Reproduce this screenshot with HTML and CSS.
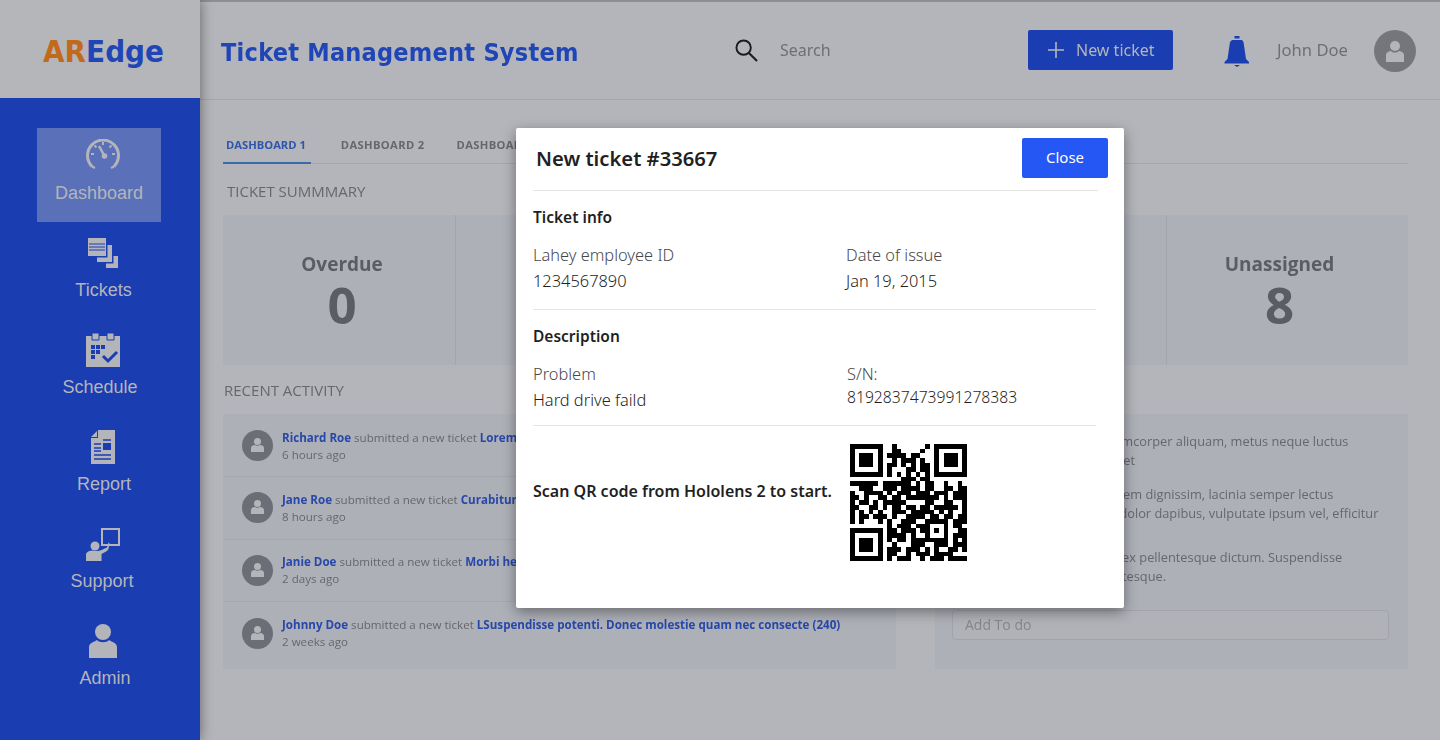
FILE: index.html
```html
<!DOCTYPE html>
<html lang="en">
<head>
  <meta charset="UTF-8">
  <title>Ticket Management System</title>
  <link rel="stylesheet" href="styles.css">
</head>
<body>
  <div class="page">
    <aside class="sidebar">
      <div class="logo"><span class="logo-ar">AR</span>Edge</div>
      <nav class="nav">
        <a class="nav-item active">
          <svg class="nav-icon" viewBox="0 0 34 34"><path d="M6 27.5A15.5 15.5 0 1 1 28 27.5" fill="none" stroke="currentColor" stroke-width="3"/><path d="M6 27.5l3 1.5M28 27.5l-3 1.5M17 3v3M5 15h3M29 15h-3M8.500 6.500l2 2M25.500 6.500l-2 2" stroke="currentColor" stroke-width="2"/><path d="M13 7l5 9" stroke="currentColor" stroke-width="2.500"/><circle cx="18.500" cy="17" r="2.800" fill="currentColor"/></svg>
          <span class="nav-label">Dashboard</span>
        </a>
        <a class="nav-item">
          <svg class="nav-icon" viewBox="0 0 34 34"><path d="M2 2h18v18H2z" fill="currentColor"/><path d="M3 8h16M3 11h16M3 14h16" stroke="#1a3db2"/><path d="M21.500 9H26v17H11v-4.500h10.500z" fill="currentColor"/><path d="M27.500 20H32v12H20v-4.500h7.500z" fill="currentColor"/></svg>
          <span class="nav-label">Tickets</span>
        </a>
        <a class="nav-item">
          <svg class="nav-icon" viewBox="0 0 34 34"><path d="M0 3h34v31H0z" fill="currentColor"/><path d="M6 0h7v7H6zM21 0h7v7h-7z" fill="currentColor" stroke="#1a3db2"/><path d="M5 12h4v4H5zM10 12h4v4h-4zM15 12h4v4h-4zM5 17h4v4H5zM10 17h4v4h-4zM5 22h4v4H5z" fill="#1a3db2"/><path d="M17 23l5 5 9-9" fill="none" stroke="#1a3db2" stroke-width="3"/></svg>
          <span class="nav-label">Schedule</span>
        </a>
        <a class="nav-item">
          <svg class="nav-icon" viewBox="0 0 34 34"><path d="M5 7l6-6v6zM12 0h17v34H5V8h7z" fill="currentColor"/><path d="M17 10h8M8 14h7M8 18h7M8 21h7M8 25h17M8 29h17" stroke="#1a3db2" stroke-width="1.500"/><path d="M17 13h8v7h-8z" fill="#1a3db2"/></svg>
          <span class="nav-label">Report</span>
        </a>
        <a class="nav-item">
          <svg class="nav-icon" viewBox="0 0 34 34"><path d="M16 2h17v16H16z" fill="none" stroke="currentColor" stroke-width="2"/><circle cx="9" cy="19" r="4.500" fill="currentColor"/><path d="M0 34v-6c0-3 3-4 6-4.500 3 .5 5 1 8 0 3-1 6-2.500 7-3l1.500-5 1 .5-1 6c-1 2-4 3.500-7 5v7z" fill="currentColor"/></svg>
          <span class="nav-label">Support</span>
        </a>
        <a class="nav-item">
          <svg class="nav-icon" viewBox="0 0 34 34"><circle cx="17" cy="8" r="8" fill="currentColor"/><path d="M3 34V23c0-4 5-5 8-7 2 3 10 3 12 0 3 2 8 3 8 7v11z" fill="currentColor"/></svg>
          <span class="nav-label">Admin</span>
        </a>
      </nav>
    </aside>

    <main class="main">
      <div class="behind">
        <header class="topbar">
          <h1 class="app-title">Ticket Management System</h1>
          <div class="search">
            <svg class="search-icon" viewBox="0 0 24 24"><circle cx="9" cy="9" r="7.500" fill="none" stroke="currentColor" stroke-width="2"/><path d="M14.500 14.500L23 23" stroke="currentColor" stroke-width="2.200"/></svg>
            <span class="search-text">Search</span>
          </div>
          <button class="new-ticket">
            <svg class="plus" viewBox="0 0 16 16"><path d="M8 0v16M0 8h16" stroke="currentColor" stroke-width="1.600"/></svg>
            New ticket
          </button>
          <svg class="bell" viewBox="0 0 26 32"><path d="M10.500 1h5v2.500h-5zM8 5h10l1.500 2 2.500 17 3 3v1.500H.5V27l3-3L6 7zM10 30h6l-3 2z" fill="currentColor"/></svg>
          <span class="user-name">John Doe</span>
          <span class="user-avatar">
            <svg viewBox="0 0 42 42"><circle cx="21" cy="16" r="5" fill="currentColor"/><path d="M12 32v-7c0-3 4-4 5-4 2 2 6 2 8 0 1 0 5 1 5 4v7z" fill="currentColor"/></svg>
          </span>
        </header>

        <div class="content">
          <div class="tabs">
            <span class="tab active">DASHBOARD 1</span>
            <span class="tab">DASHBOARD 2</span>
            <span class="tab">DASHBOARD 3</span>
          </div>

          <h2 class="section-title summary-title">TICKET SUMMMARY</h2>
          <div class="summary">
            <div class="stat">
              <span class="stat-name">Overdue</span>
              <span class="stat-value">0</span>
            </div>
            <div class="stat stat-wide"></div>
            <div class="stat stat-last">
              <span class="stat-name">Unassigned</span>
              <span class="stat-value">8</span>
            </div>
          </div>

          <h2 class="section-title activity-title">RECENT ACTIVITY</h2>
          <div class="panels">
            <ul class="activity">
              <li class="activity-row">
                <span class="mini-avatar"><svg viewBox="0 0 31 31"><circle cx="15.500" cy="11.500" r="3.500" fill="currentColor"/><path d="M9 22v-4c0-2 2-3 4-3 1 1 4 1 5 0 2 0 4 1 4 3v4z" fill="currentColor"/></svg></span>
                <div>
                  <p><a>Richard Roe</a> submitted a new ticket <a>Lorem</a></p>
                  <p>6 hours ago</p>
                </div>
              </li>
              <li class="activity-row">
                <span class="mini-avatar"><svg viewBox="0 0 31 31"><circle cx="15.500" cy="11.500" r="3.500" fill="currentColor"/><path d="M9 22v-4c0-2 2-3 4-3 1 1 4 1 5 0 2 0 4 1 4 3v4z" fill="currentColor"/></svg></span>
                <div>
                  <p><a>Jane Roe</a> submitted a new ticket <a>Curabitur</a></p>
                  <p>8 hours ago</p>
                </div>
              </li>
              <li class="activity-row">
                <span class="mini-avatar"><svg viewBox="0 0 31 31"><circle cx="15.500" cy="11.500" r="3.500" fill="currentColor"/><path d="M9 22v-4c0-2 2-3 4-3 1 1 4 1 5 0 2 0 4 1 4 3v4z" fill="currentColor"/></svg></span>
                <div>
                  <p><a>Janie Doe</a> submitted a new ticket <a>Morbi he</a></p>
                  <p>2 days ago</p>
                </div>
              </li>
              <li class="activity-row">
                <span class="mini-avatar"><svg viewBox="0 0 31 31"><circle cx="15.500" cy="11.500" r="3.500" fill="currentColor"/><path d="M9 22v-4c0-2 2-3 4-3 1 1 4 1 5 0 2 0 4 1 4 3v4z" fill="currentColor"/></svg></span>
                <div>
                  <p><a>Johnny Doe</a> submitted a new ticket <a>LSuspendisse potenti. Donec molestie quam nec consecte (240)</a></p>
                  <p>2 weeks ago</p>
                </div>
              </li>
            </ul>
            <div class="todo">
              <p>Nullam purus tellus ullamcorper aliquam, metus neque luctus<br>Lorem ipsum dolore amet</p>
              <p>Donec quis nulla nec lorem dignissim, lacinia semper lectus<br>Praesent vitae nunc eu dolor dapibus, vulputate ipsum vel, efficitur</p>
              <p>Aenean sed nulla vitam ex pellentesque dictum. Suspendisse<br>Cras sed sit amet pellentesque.</p>
              <div class="todo-input">Add To do</div>
            </div>
          </div>
        </div>
      </div>

      <div class="modal-layer">
        <section class="modal">
          <div class="modal-head">
            <h3 class="modal-title">New ticket #33667</h3>
            <button class="close">Close</button>
          </div>
          <hr class="rule">
          <div class="block">
            <h4 class="block-title">Ticket info</h4>
            <div class="fields">
              <div><p class="label">Lahey employee ID</p><p class="value">1234567890</p></div>
              <div><p class="label">Date of issue</p><p class="value">Jan 19, 2015</p></div>
            </div>
          </div>
          <hr class="rule short">
          <div class="block block-desc">
            <h4 class="block-title">Description</h4>
            <div class="fields">
              <div><p class="label">Problem</p><p class="value">Hard drive faild</p></div>
              <div class="serial"><p class="label">S/N:</p><p class="value">8192837473991278383</p></div>
            </div>
          </div>
          <hr class="rule short">
          <div class="scan">
            <p class="scan-text">Scan QR code from Hololens 2 to start.</p>
            <svg class="qr" id="qr" viewBox="0 0 25 25" shape-rendering="crispEdges"></svg>
          </div>
        </section>
      </div>
    </main>
  </div>
  <script src="qr.js"></script>
</body>
</html>
```

FILE: styles.css
```css
html, body {
  margin: 0;
  padding: 0;
  height: 100%;
}
body {
  font-family: "Open Sans", "Liberation Sans", sans-serif;
  background-color: #b4b5ba;
  overflow: hidden;
}
p, h1, h2, h3, h4, ul {
  margin: 0;
  padding: 0;
}
.page {
  display: flex;
  height: 740px;
}

/* sidebar */
.sidebar {
  width: 200px;
  flex: none;
  background-color: #1a3db2;
  box-shadow: 0 0 12px rgba(0, 0, 0, .45);
  position: relative;
  z-index: 1;
}
.logo {
  height: 98px;
  background-color: #b5b6ba;
  color: #1f45b6;
  font-family: "DejaVu Sans", sans-serif;
  font-stretch: condensed;
  font-weight: 700;
  font-size: 31px;
  line-height: 102px;
  padding-left: 43px;
  box-sizing: border-box;
}
.logo-ar {
  color: #c26a1c;
}
.nav {
  display: flex;
  flex-direction: column;
  gap: 3px;
  padding: 30px 0 0 37px;
}
.nav-item {
  width: 124px;
  height: 94px;
  box-sizing: border-box;
  padding-top: 11px;
  color: #b4b5ba;
  display: flex;
  flex-direction: column;
  align-items: center;
}
.nav-item.active {
  background-color: #5a70b8;
}
.nav-icon {
  width: 34px;
  height: 34px;
  margin-left: 8px;
}
.nav-label {
  font-family: "Liberation Sans", sans-serif;
  font-size: 18px;
  line-height: 20px;
  margin-top: 10px;
}
.nav-item:nth-child(2) .nav-label { margin-left: 9px; }
.nav-item:nth-child(3) .nav-label { margin-left: 2px; }
.nav-item:nth-child(4) .nav-label { margin-left: 10px; }
.nav-item:nth-child(5) .nav-label { margin-left: 6px; }
.nav-item:nth-child(6) .nav-label { margin-left: 12px; }

/* main */
.main {
  flex: 1;
  position: relative;
  min-width: 0;
}
.behind {
  height: 100%;
  filter: blur(.4px);
}
.topbar {
  height: 100px;
  box-sizing: border-box;
  border-top: 2px solid #8d8e93;
  border-bottom: 1px solid #a6a7ac;
  display: flex;
  align-items: center;
  color: #6e6f75;
  font-size: 16px;
}
.app-title {
  font-family: "DejaVu Sans", sans-serif;
  font-stretch: condensed;
  font-weight: 700;
  font-size: 25px;
  letter-spacing: .25px;
  color: #1f45b6;
  margin: 4px 0 0 21px;
  width: 514px;
  flex: none;
}
.search {
  display: flex;
  align-items: center;
  gap: 22px;
  width: 293px;
  flex: none;
  font-family: "Noto Sans", sans-serif;
}
.search-icon {
  width: 23px;
  height: 23px;
  color: #1c1c20;
}
.search-text {
  margin-top: -2px;
}
.new-ticket {
  width: 145px;
  height: 40px;
  flex: none;
  border: 0;
  border-radius: 2px;
  background-color: #1a3db2;
  color: #b4b5ba;
  font-family: "Noto Sans", sans-serif;
  font-size: 16px;
  display: flex;
  align-items: center;
  gap: 12px;
  padding: 0 0 0 20px;
  margin-top: -1px;
}
.plus {
  width: 16px;
  height: 16px;
}
.bell {
  width: 26px;
  height: 32px;
  flex: none;
  color: #1a3db2;
  margin: 0 27px 0 51px;
}
.user-name {
  font-family: "Noto Sans", sans-serif;
  font-size: 16.600px;
  width: 97px;
  flex: none;
  margin-top: -3px;
}
.user-avatar {
  width: 42px;
  height: 42px;
  flex: none;
  border-radius: 50%;
  background-color: #75767b;
  color: #b4b5ba;
}
.user-avatar svg {
  display: block;
}

.content {
  padding: 0 32px 0 23px;
}
.tabs {
  height: 64px;
  box-sizing: border-box;
  border-bottom: 1px solid #a6a7ae;
  display: flex;
  align-items: flex-end;
  font-size: 11.200px;
  font-weight: 700;
  color: #66676d;
}
.tab {
  padding: 0 5px 10px 3px;
  margin-right: 24px;
  margin-bottom: -1px;
  line-height: 15px;
  letter-spacing: .35px;
  border-bottom: 2px solid transparent;
}
.tab.active {
  color: #2f55ad;
  border-bottom-color: #3a6aa8;
  letter-spacing: 0;
  margin-right: 27px;
}
.section-title {
  font-size: 15px;
  font-weight: 400;
  color: #66676d;
  line-height: 20px;
}
.summary-title {
  padding: 17px 0 14px 4px;
}
.summary {
  height: 150px;
  display: flex;
  background-color: #aeb0b8;
}
.stat {
  width: 233px;
  flex: none;
  box-sizing: border-box;
  border-right: 1px solid #a3a5ae;
  display: flex;
  flex-direction: column;
  align-items: center;
  padding: 36px 0 0 6px;
  color: #5c5d63;
}
.stat-wide {
  width: auto;
  flex: 1;
}
.stat-last {
  width: 241px;
  border-right: 0;
  padding: 36px 16px 0 0;
}
.stat-name {
  font-size: 19px;
  font-weight: 700;
  line-height: 26px;
}
.stat-value {
  font-size: 51px;
  font-weight: 700;
  line-height: 55px;
}
.activity-title {
  padding: 15px 0 14px 1px;
}
.panels {
  display: flex;
  justify-content: space-between;
  height: 255px;
}
.activity {
  width: 673px;
  list-style: none;
  background-color: #aeb0b8;
  padding-top: 1px;
}
.activity-row {
  height: 62.300px;
  box-sizing: border-box;
  border-bottom: 1px solid #a5a7af;
  display: flex;
  align-items: center;
  gap: 9px;
  padding-left: 19px;
  font-size: 11.600px;
  line-height: 17px;
  color: #66676d;
}
.activity-row:last-child {
  border-bottom: 0;
}
.activity-row a {
  color: #2748a8;
  font-weight: 700;
}
.mini-avatar {
  width: 31px;
  height: 31px;
  flex: none;
  border-radius: 50%;
  background-color: #6b6e76;
  color: #b4b5ba;
}
.mini-avatar svg {
  display: block;
}
.todo {
  width: 473px;
  box-sizing: border-box;
  background-color: #aeb0b8;
  padding: 18px 19px 0 17px;
  font-size: 12.800px;
  line-height: 19px;
  color: #66676d;
  white-space: nowrap;
}
.todo p {
  padding-left: 28px;
  margin-bottom: 15px;
}
.todo p:nth-child(2) {
  margin-bottom: 25px;
}
.todo-input {
  width: 437px;
  height: 30px;
  box-sizing: border-box;
  margin-top: 24px;
  border: 1px solid #a2a4ab;
  border-radius: 4px;
  background-color: #b1b2b8;
  padding-left: 12px;
  font-size: 14px;
  line-height: 28px;
  color: #85868c;
}

/* modal */
.modal-layer {
  position: absolute;
  top: 128px;
  left: 0;
  right: 0;
  display: flex;
  justify-content: center;
}
.modal {
  width: 608px;
  height: 480px;
  box-sizing: border-box;
  padding: 0 26px 0 17px;
  background-color: #fff;
  border-radius: 2px;
  box-shadow: 0 4px 14px rgba(0, 0, 0, .4);
  font-family: "Noto Sans", sans-serif;
  color: #1f1f24;
}
.modal-head {
  height: 62px;
  display: flex;
  align-items: center;
  justify-content: space-between;
  margin-right: -10px;
  padding-left: 3px;
}
.modal-title {
  font-size: 20.200px;
  font-weight: 600;
  margin-top: -2px;
}
.close {
  width: 86px;
  height: 40px;
  border: 0;
  border-radius: 2px;
  background-color: #2557f5;
  color: #fff;
  font-family: "Noto Sans", sans-serif;
  font-size: 15px;
  padding-bottom: 4px;
  margin-top: -2px;
}
.rule {
  margin: 0;
  border: 0;
  border-top: 1px solid #e4e4e4;
}
.rule.short {
  margin-right: 2px;
}
.block {
  padding: 14px 0 15px;
}
.block-desc {
  padding-bottom: 12px;
}
.block-title {
  font-size: 15.500px;
  font-weight: 600;
  line-height: 24px;
  margin-bottom: 13px;
}
.fields {
  display: grid;
  grid-template-columns: 313px 1fr;
  font-size: 16.400px;
  line-height: 26px;
}
.label {
  font-weight: 300;
  color: #47474c;
}
.value {
  font-weight: 300;
}
.serial {
  padding-left: 1px;
}
.serial .value {
  font-size: 15.700px;
  line-height: 20px;
}
.scan {
  display: grid;
  grid-template-columns: 317px 117px;
  padding-top: 18px;
}
.scan-text {
  font-size: 16px;
  font-weight: 600;
  line-height: 24px;
  margin-top: 35px;
  white-space: nowrap;
}
.qr {
  width: 117px;
  height: 117px;
  display: block;
}
```

FILE: qr.js
```js
// draws the QR code row by row
var rows = [
  '#######..#......#.#######',
  '#.....#..##....#..#.....#',
  '#.###.#.####.##...#.###.#',
  '#.###.#..#.###.#..#.###.#',
  '#.###.#.##.#.#.##.#.###.#',
  '#.....#.#...##.##.#.....#',
  '#######.#.#.#.#.#.#######',
  '...........###.##........',
  '######.######.#.##..#..#.',
  '..###..###.####.##..##.##',
  '#..####.#.###.###.###.###',
  '##.#..##.##.#######.#.###',
  '#.##.#.#####....##..##..#',
  '##..##.#.##.##.##.#####.#',
  '#.#.#.#..###.#####.#.#..#',
  '#.##.###.#..####.##.##.##',
  '#.#...#.#..###..#####.###',
  '........#.###.###...#.##.',
  '#######.##.###.##.#.#..##',
  '#.....#.####.#..#...#.###',
  '#.###.#.#.##.########.#.#',
  '#.###.#..#...###..###.###',
  '#.###.#.###.###.#.#..##.#',
  '#.....#.##..#.###.####...',
  '#######.#.###..#.###.####'
];
var d = '';
rows.forEach(function (row, y) {
  row.split('').forEach(function (c, x) {
    if (c === '#') d += 'M' + x + ' ' + y + 'h1v1h-1z';
  });
});
document.getElementById('qr').innerHTML = '<path d="' + d + '" fill="#000"/>';
```
